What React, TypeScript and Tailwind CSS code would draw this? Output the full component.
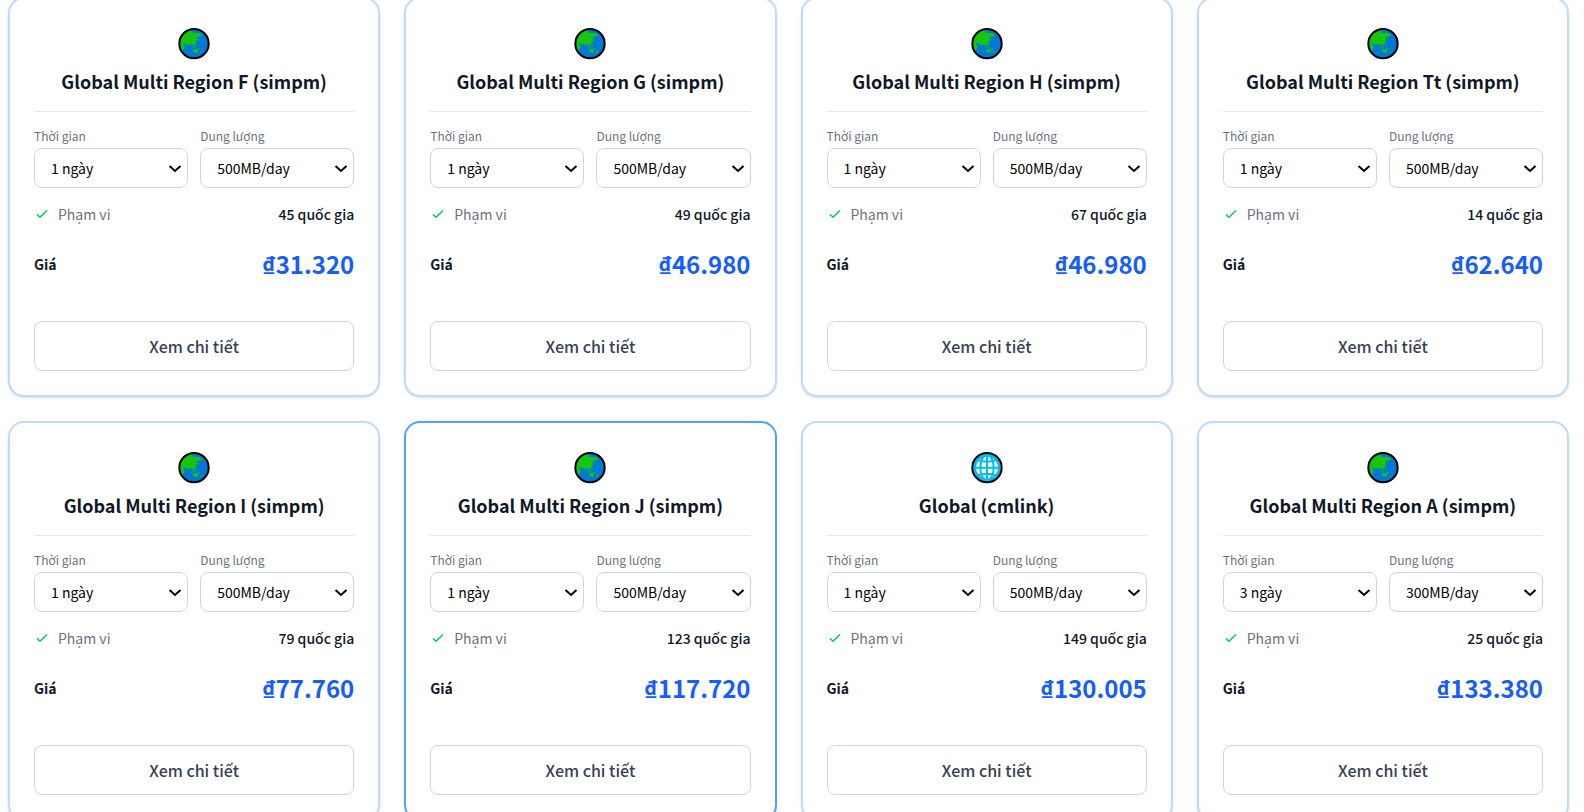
import React, { useId } from "react";

type Plan = {
  name: string;
  days: string;
  data: string;
  scope: string;
  price: string;
  icon?: "web";
  active?: boolean;
};

const plans: Plan[] = [
  { name: "Global Multi Region F (simpm)", days: "1 ngày", data: "500MB/day", scope: "45 quốc gia", price: "₫31.320" },
  { name: "Global Multi Region G (simpm)", days: "1 ngày", data: "500MB/day", scope: "49 quốc gia", price: "₫46.980" },
  { name: "Global Multi Region H (simpm)", days: "1 ngày", data: "500MB/day", scope: "67 quốc gia", price: "₫46.980" },
  { name: "Global Multi Region Tt (simpm)", days: "1 ngày", data: "500MB/day", scope: "14 quốc gia", price: "₫62.640" },
  { name: "Global Multi Region I (simpm)", days: "1 ngày", data: "500MB/day", scope: "79 quốc gia", price: "₫77.760" },
  { name: "Global Multi Region J (simpm)", days: "1 ngày", data: "500MB/day", scope: "123 quốc gia", price: "₫117.720", active: true },
  { name: "Global (cmlink)", days: "1 ngày", data: "500MB/day", scope: "149 quốc gia", price: "₫130.005", icon: "web" },
  { name: "Global Multi Region A (simpm)", days: "3 ngày", data: "300MB/day", scope: "25 quốc gia", price: "₫133.380" },
];

function EarthIcon() {
  return (
    <svg viewBox="0 0 96 96" className="size-8" aria-hidden="true">
      <circle cx="48" cy="47" r="44.5" fill="#0078d7" />
      <path
        fill="#16c60c"
        d="M28 11 L36 7 L43 10 L45 14 L54 15 L62 16 L72 18 L70 23 L64 25 L61 30 L59 26 L55 28 L58 34 L56 41 L52 43 L53 48 L49 53 L46 48 L44 52 L43 57 L40 49 L37 48 L34 55 L30 48 L24 49 L19 46 L14 48 L18 52 L20 56 L16 66 L12 72 Q0 48 11 28 Q18 17 28 11Z"
      />
      <path
        fill="#16c60c"
        d="M45 66 L50 63 L55 64 L58 61 L61 69 L57 75 L52 72 L46 73Z M71 67 L73 71 L70 75 L66 78 L69 73Z M42 56 L46 61 L44 62 L41 58Z M48 55 L52 54 L51 59 L48 60Z M54 48 L56 47 L57 53 L54 52Z M57 58 L65 61 L66 64 L60 62Z M60 36 L63 31 L62 36 L59 39Z"
      />
      <circle cx="48" cy="47" r="44" fill="none" stroke="#000" strokeWidth="6" />
    </svg>
  );
}

function WebIcon() {
  return (
    <svg viewBox="0 0 96 96" className="size-8" aria-hidden="true">
      <circle cx="48" cy="47" r="44" fill="#fff" />
      <g fill="none" stroke="#00bcf2" strokeWidth="6">
        <circle cx="48" cy="47" r="37" strokeWidth="9" />
        <ellipse cx="48" cy="47" rx="20" ry="38" />
        <path d="M48 8V86M8 47H88M19 24Q48 34 77 24M19 70Q48 60 77 70" />
      </g>
      <circle cx="48" cy="47" r="44" fill="none" stroke="#000" strokeWidth="6" />
    </svg>
  );
}

function Check() {
  return (
    <svg viewBox="0 0 24 24" className="size-4 text-green-500" fill="none" stroke="currentColor" strokeWidth="2" strokeLinecap="round" strokeLinejoin="round" aria-hidden="true">
      <path d="M5 13l4 4L19 7" />
    </svg>
  );
}

function Field({ label, value }: { label: string; value: string }) {
  const id = useId();
  return (
    <div className="min-w-0 flex-1">
      <label htmlFor={id} className="mb-1 block text-xs leading-4 text-gray-500">
        {label}
      </label>
      <div className="relative">
        <select id={id} defaultValue={value} className="h-10 w-full appearance-none rounded-lg border border-gray-300 bg-white px-4 text-sm text-black">
          <option>{value}</option>
        </select>
        <svg
          viewBox="0 0 16 16"
          className="pointer-events-none absolute top-3 right-[5px] size-4"
          fill="none"
          stroke="#000"
          strokeWidth="2"
          aria-hidden="true"
        >
          <path d="M2.5 6l5.5 5 5.5-5" />
        </svg>
      </div>
    </div>
  );
}

function PlanCard({ plan }: { plan: Plan }) {
  return (
    <article
      className={`rounded-2xl border-2 bg-white p-6 shadow-sm ${plan.active ? "border-blue-400" : "border-blue-200"}`}
    >
      <header className="flex flex-col items-center gap-[7px] border-b border-gray-200 pt-[5px] pb-4">
        {plan.icon === "web" ? <WebIcon /> : <EarthIcon />}
        <h3 className="text-lg leading-7 font-bold text-gray-900">{plan.name}</h3>
      </header>
      <div className="mt-4 flex gap-3">
        <Field label="Thời gian" value={plan.days} />
        <Field label="Dung lượng" value={plan.data} />
      </div>
      <div className="mt-4 flex items-center justify-between text-sm leading-5">
        <span className="flex items-center gap-2 text-gray-500">
          <Check />
          Phạm vi
        </span>
        <span className="font-medium text-gray-900">{plan.scope}</span>
      </div>
      <div className="mt-6 flex items-center justify-between">
        <span className="text-sm leading-5 font-bold text-gray-900">Giá</span>
        <span className="text-2xl leading-8 font-bold text-blue-600">{plan.price}</span>
      </div>
      <button type="button" className="mt-[41px] h-[50px] w-full rounded-lg border border-gray-300 text-base leading-6 font-medium text-gray-700">
        Xem chi tiết
      </button>
    </article>
  );
}

export default function App() {
  return (
    <main className="h-screen overflow-hidden bg-white pr-[15px] pl-2 font-['Noto_Sans_CJK_SC',sans-serif]">
      <div className="-mt-[3px] grid grid-cols-4 gap-6">
        {plans.map((plan) => (
          <PlanCard key={plan.name} plan={plan} />
        ))}
      </div>
    </main>
  );
}
